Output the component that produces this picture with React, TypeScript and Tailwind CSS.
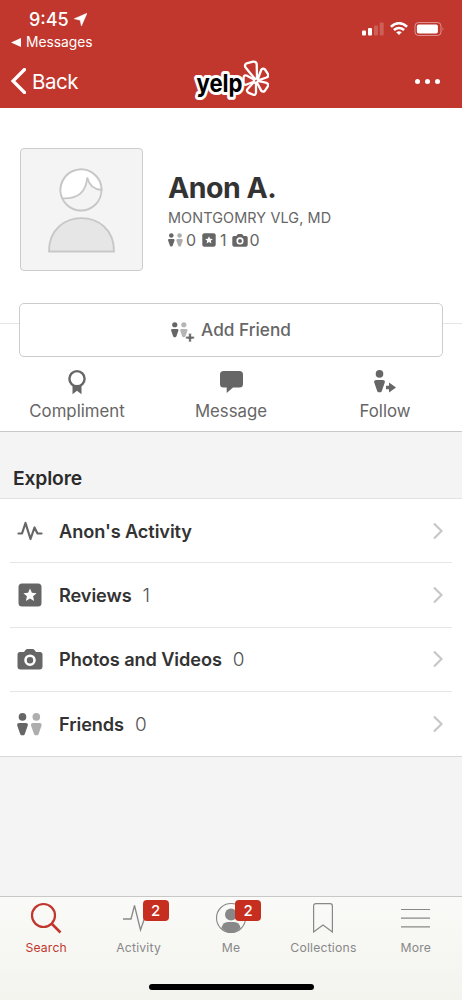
import type { ReactNode } from 'react';

const BODY = 'M2.2 10h6.6c1.7 0 2.4 1.2 1.9 2.7l-2.8 8c-.4 1-.9 1.5-1.7 1.5H4.8c-.8 0-1.3-.5-1.7-1.5l-2.8-8C-.2 11.2.5 10 2.2 10z';
const STAR = 'M12 5.4l1.9 4.3 4.7.5-3.5 3.1 1 4.6-4.1-2.4-4.1 2.4 1-4.6-3.5-3.1 4.7-.5z';

function Person({ x = 0, fill = '#666' }: { x?: number; fill?: string }) {
  return (
    <g transform={`translate(${x} 0)`} fill={fill}>
      <circle cx="5.5" cy="3.9" r="3.8" />
      <path d={BODY} />
    </g>
  );
}

function FriendsIcon({ className }: { className: string }) {
  return (
    <svg viewBox="0 0 25 23" className={className}>
      <Person />
      <Person x={13.8} fill="#aeaeae" />
    </svg>
  );
}

function ReviewIcon({ className }: { className: string }) {
  return (
    <svg viewBox="0 0 24 24" className={className}>
      <rect x="0.5" y="0.5" width="23" height="23" rx="3.5" fill="#666" />
      <path d={STAR} fill="#fff" />
    </svg>
  );
}

function CameraIcon({ className }: { className: string }) {
  return (
    <svg viewBox="0 0 26 21" className={className}>
      <path d="M3 3h4l1.5-2Q9.2 0 10.5 0h5q1.3 0 2 1L19 3h4q2.5 0 2.5 2.5v12q0 3-3 3h-19q-3 0-3-3v-12Q.5 3 3 3z" fill="#666" />
      <circle cx="13" cy="11.2" r="4.5" fill="#666" stroke="#fff" strokeWidth="2.6" />
    </svg>
  );
}

function PulseIcon() {
  return (
    <svg viewBox="0 0 26 20" className="h-5 w-[26px]" fill="none" stroke="#666" strokeWidth="2.2" strokeLinejoin="round">
      <path d="M1.5 12.5H5L8.5 2l5 16 4-11.5 3 6h4" strokeLinecap="round" />
    </svg>
  );
}

function YelpLogo() {
  return (
    <svg viewBox="0 0 76 42" className="h-[42px] w-[76px]" aria-label="yelp">
      <g fill="#c1372e" stroke="#fff" strokeWidth="2.3" strokeLinejoin="round">
        <path d="M61.6 18.5 52.4 7.2Q51.2 4.6 53.6 3.3L60 1.7Q63.4 1.4 63.7 4.2L64 17Q63.200 20 61.600 18.500z" />
        <path d="M65 18.500l3.200-8.500Q69.800 7.700 72 9.500l3 4.600Q75.800 16.500 73.500 17.500l-7 2.300Q64.300 20.300 65 18.500z" />
        <path d="M66 21.200l7.700 1.700Q75.800 24 74.800 26.300l-3 4.500Q70 32.500 68.200 30.600l-4-7.600Q63.800 20.800 66 21.200z" />
        <path d="M63 24.200v8.500Q62.600 35.400 60.200 34.800l-5-2.200Q53 31 54.600 29l5.400-6Q62.900 21.600 63 24.200z" />
        <path d="M60 22l-7 2.700Q50.800 25 50.500 22.800l.1-5.600Q51.200 14.800 53.500 15.500l6.600 3.500Q62 21 60 22z" />
      </g>
      <text
        x="3.5"
        y="31.500"
        textLength="46"
        lengthAdjust="spacingAndGlyphs"
        fill="#000"
        stroke="#fff"
        strokeWidth="6"
        strokeLinejoin="round"
        paintOrder="stroke"
        className="font-['Inter',sans-serif] text-[24.5px] font-bold"
      >
        yelp
      </text>
    </svg>
  );
}

function Header() {
  return (
    <header className="h-[108px] bg-[#c1372e] text-white">
      <div className="flex h-[54px] justify-between pt-[9px] pr-[17px] pl-[11px]">
        <div>
          <div className="flex h-[21px] items-center gap-[5px] pl-[18px]">
            <span className="text-[18px] leading-[21px] font-medium">9:45</span>
            <svg viewBox="0 0 13 13" className="size-[13px]" fill="#fff">
              <path d="M13 .2 7.4 13 6.200 7.200.2 5.800z" stroke="#fff" strokeWidth="0.5" />
            </svg>
          </div>
          <div className="flex h-[24px] items-center gap-[5px]">
            <svg viewBox="0 0 10 9" className="h-[9px] w-2.5 shrink-0" fill="#fff">
              <path d="M0 4.5 10 0v9z" />
            </svg>
            <span className="pt-px text-[13.8px]">Messages</span>
          </div>
        </div>
        <div className="flex h-[39px] items-center gap-[6px]">
          <svg viewBox="0 0 22 14" className="h-3.5 w-[22px]" fill="#fff">
            <rect x="0" y="8.5" width="4" height="5" rx="1" />
            <rect x="6" y="6" width="4" height="7.5" rx="1" />
            <rect x="12" y="3.5" width="4" height="10" rx="1" opacity="0.2" />
            <rect x="17.7" y="0.5" width="4" height="13" rx="1" opacity="0.2" />
          </svg>
          <svg viewBox="0 0 18 14" className="h-3.5 w-[18px]" fill="none" stroke="#fff" strokeWidth="2.6">
            <path d="M.9 4.8Q9-2.4 17.1 4.8M3.9 8.1q5.100-4.200 10.200 0" />
            <path d="M9 13.1 6.2 10.3Q9 8.2 11.8 10.300z" fill="#fff" stroke="none" />
          </svg>
          <svg viewBox="0 0 31 14" className="h-3.5 w-[31px]">
            <rect x="1" y=".5" width="26" height="13" rx="3.5" fill="none" stroke="#fff" opacity="0.45" />
            <rect x="2.9" y="2.4" width="21" height="9.2" rx="1.8" fill="#fff" />
            <path d="M28.7 5q1.500 2 0 4z" fill="#fff" opacity="0.5" />
          </svg>
        </div>
      </div>
      <div className="grid h-[54px] grid-cols-3 items-center">
        <div className="flex items-center gap-[6px] pl-[11px]">
          <svg viewBox="0 0 15 26" className="h-[26px] w-[15px]" fill="none" stroke="#fff" strokeWidth="3.3">
            <path d="M13.5 1.5 2 13l11.5 11.500" strokeLinecap="round" />
          </svg>
          <span className="pt-0.5 text-[20.5px] tracking-[-0.5px]">Back</span>
        </div>
        <div className="flex justify-center">
          <YelpLogo />
        </div>
        <div className="flex justify-end gap-[5px] pr-[22px]">
          <span className="size-[5px] rounded-full bg-white" />
          <span className="size-[5px] rounded-full bg-white" />
          <span className="size-[5px] rounded-full bg-white" />
        </div>
      </div>
    </header>
  );
}

function Avatar() {
  return (
    <div className="flex size-[123px] shrink-0 items-center justify-center rounded-[4px] border border-[#ccc] bg-[#f4f4f4]">
      <svg viewBox="0 0 121 121" className="size-[121px]" stroke="#c7c7c7" strokeWidth="1.8">
        <circle cx="60" cy="41" r="20.5" fill="#f4f4f4" />
        <path d="M41.300 49.400A20.500 20.500 0 1 1 80.500 41Q69 40 66.200 28.500 64.500 50.500 41.300 49.400z" fill="#fff" />
        <path d="M28 102.500C27.500 58 93.500 58 93 102.500z" fill="#e6e6e6" />
      </svg>
    </div>
  );
}

function ActionButton({ label, children }: { label: string; children: ReactNode }) {
  return (
    <button className="flex flex-col items-center gap-[6px]">
      <span className="flex h-[27px] items-center">{children}</span>
      <span className="text-[16.8px] leading-5 text-[#666]">{label}</span>
    </button>
  );
}

function Profile() {
  return (
    <section className="h-[324px] border-b border-[#c8c8c8] bg-white">
      <div className="flex h-[216px] gap-[25px] border-b border-[#e6e6e6] pt-10 pl-5">
        <Avatar />
        <div className="pt-[22px]">
          <h1 className="text-[28.5px] leading-9 font-bold tracking-[-0.5px] text-[#333]">Anon A.</h1>
          <div className="text-[14.4px] leading-[23px] tracking-[0.12px] text-[#666]">MONTGOMRY VLG, MD</div>
          <div className="flex h-[22px] items-center text-[16px] text-[#666]">
            <FriendsIcon className="mr-[3px] h-[14px] w-[15px]" />0
            <ReviewIcon className="mr-1 ml-[6px] size-[14px]" />1
            <CameraIcon className="mr-[2px] ml-[5px] h-[13px] w-[16px]" />0
          </div>
        </div>
      </div>
      <div className="relative -mt-[21px] px-[19px]">
        <button className="flex h-[54px] w-full items-center justify-center gap-[6px] rounded-[5px] border border-[#ccc] bg-white">
          <svg viewBox="0 0 35 29" className="mt-[3px] h-[20px] w-[24px]">
            <Person />
            <Person x={13.2} fill="#b5b5b5" />
            <path d="M25.7 16.5h4v4.2h4.3v4h-4.3v4.3h-4v-4.300h-4.200v-4h4.200z" fill="#666" stroke="#fff" strokeWidth="1" />
          </svg>
          <span className="text-[17.2px] font-medium text-[#666]">Add Friend</span>
        </button>
      </div>
      <div className="grid grid-cols-3 pt-[11px]">
        <ActionButton label="Compliment">
          <svg viewBox="0 0 20 26" className="h-[26px] w-5">
            <path d="M5.5 15v10.300l4.500-3.500 4.500 3.500V15z" fill="#666" />
            <circle cx="10" cy="9.7" r="7.6" fill="#fff" stroke="#666" strokeWidth="2.4" />
          </svg>
        </ActionButton>
        <ActionButton label="Message">
          <svg viewBox="0 0 23 22" className="h-[22px] w-[23px]" fill="#666">
            <path d="M3.5 0h16Q23 0 23 3.5v9.500q0 3.500-3.500 3.500H13L6.700 22v-5.500H3.500Q0 16.500 0 13V3.500Q0 0 3.500 0z" />
          </svg>
        </ActionButton>
        <ActionButton label="Follow">
          <svg viewBox="0 0 22 23" className="h-[23px] w-[22px]">
            <Person />
            <path d="M12 15.700h3V12.500l7 5-7 5v-3.200h-3z" fill="#666" />
          </svg>
        </ActionButton>
      </div>
    </section>
  );
}

const rows = [
  { label: "Anon's Activity", count: '', icon: <PulseIcon /> },
  { label: 'Reviews', count: '1', icon: <ReviewIcon className="size-6" /> },
  { label: 'Photos and Videos', count: '0', icon: <CameraIcon className="h-[21px] w-[26px]" /> },
  { label: 'Friends', count: '0', icon: <FriendsIcon className="h-[23px] w-[25px]" /> },
];

function Explore() {
  return (
    <section className="grow">
      <h2 className="h-[67px] border-b border-[#e2e2e2] pt-[34px] pl-[13px] text-[19.3px] leading-6 font-semibold tracking-[-0.15px] text-[#2b2b2b]">Explore</h2>
      <div className="border-b border-[#d9d9d9] bg-white px-2.5">
        {rows.map((row) => (
          <div key={row.label} className="flex h-[64.3px] items-center border-b border-[#e6e6e6] pr-[9px] last:border-b-0">
            <span className="flex w-[39px] justify-center">{row.icon}</span>
            <span className="ml-2.5 pt-px text-[18.2px] font-semibold tracking-[-0.1px] text-[#333]">{row.label}</span>
            <span className="ml-[11px] pt-0.5 text-[19px] font-light text-[#555]">{row.count}</span>
            <svg viewBox="0 0 10 18" className="ml-auto h-[18px] w-2.5" fill="none" stroke="#c7c7c7" strokeWidth="2.2">
              <path d="M1 1.5 8.5 9 1 16.500" />
            </svg>
          </div>
        ))}
      </div>
    </section>
  );
}

function Badge() {
  return (
    <span className="absolute top-[3px] left-[calc(50%+4px)] flex h-[21px] w-[26px] items-center justify-center rounded-[4px] bg-[#c62f20] pt-px text-[15px] font-medium text-white">
      2
    </span>
  );
}

function Tab({ label, active, badge, children }: { label: string; active?: boolean; badge?: boolean; children: ReactNode }) {
  return (
    <div className={`relative flex flex-1 flex-col items-center ${active ? 'text-[#c1372e]' : 'text-[#888]'}`}>
      <span className="flex h-[42px] items-center">{children}</span>
      <span className="pt-px text-[12.2px] leading-4 tracking-[0.2px]">{label}</span>
      {badge && <Badge />}
    </div>
  );
}

function TabBar() {
  return (
    <nav className="h-[104px] border-t border-[#c8c8c8] bg-linear-to-b from-[#fafaf8] to-[#f3f4ee]">
      <div className="flex h-[87px]">
        <Tab label="Search" active>
          <svg viewBox="0 0 32 32" className="size-8" fill="none" stroke="currentColor" strokeWidth="2.2">
            <circle cx="13.5" cy="13.5" r="11.5" />
            <path d="m21.5 21.5 9 9" strokeWidth="2.6" />
          </svg>
        </Tab>
        <Tab label="Activity" badge>
          <svg viewBox="0 0 32 28" className="h-7 w-8" fill="none" stroke="currentColor" strokeWidth="1.3">
            <path d="M0 15h8L11.500 1.500l6 24.500L22 13h8" />
          </svg>
        </Tab>
        <Tab label="Me" badge>
          <svg viewBox="0 0 32 32" className="size-8" fill="currentColor">
            <circle cx="16" cy="16" r="14.5" fill="none" stroke="currentColor" strokeWidth="1.1" />
            <circle cx="16" cy="12.5" r="6" />
            <path d="M6.500 26Q7.500 20 13 20h6q5.500 0 6.500 6-9.500 9-19 0z" />
          </svg>
        </Tab>
        <Tab label="Collections">
          <svg viewBox="0 0 20 30" className="h-[30px] w-5" fill="none" stroke="currentColor" strokeWidth="1.2">
            <path d="M.6 29V3Q.6.7 3 .7h14q2.400 0 2.400 2.300v26L10 22z" />
          </svg>
        </Tab>
        <Tab label="More">
          <svg viewBox="0 0 29 20" className="h-5 w-[29px]" stroke="currentColor" strokeWidth="1.2">
            <path d="M0 1.5h29M0 10.2h29M0 18.900h29" />
          </svg>
        </Tab>
      </div>
      <div className="mx-auto h-1.5 w-[165px] rounded-full bg-black" />
    </nav>
  );
}

export default function App() {
  return (
    <main className="flex h-[1000px] w-[462px] flex-col overflow-hidden bg-[#f4f4f4] font-['Inter',sans-serif]">
      <Header />
      <Profile />
      <Explore />
      <TabBar />
    </main>
  );
}
